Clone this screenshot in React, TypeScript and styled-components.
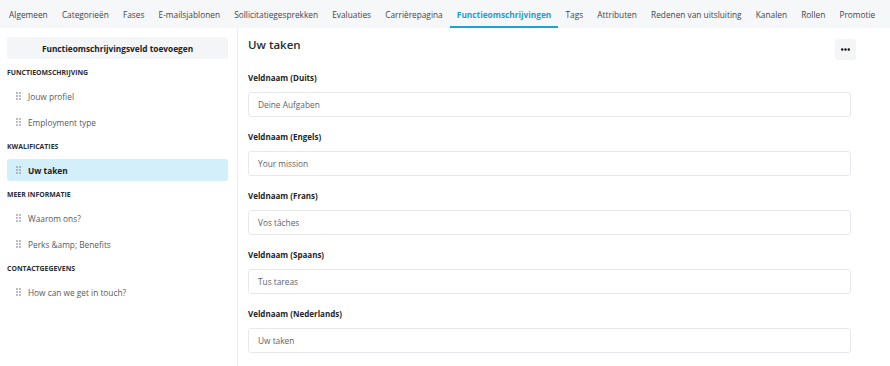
import styled, { createGlobalStyle } from "styled-components";

const GlobalStyle = createGlobalStyle`
  html, body {
    margin: 0;
    padding: 0;
    background: #ffffff;
    font-family: "Open Sans", "Noto Sans", sans-serif;
    color: #333;
  }
  * {
    box-sizing: border-box;
  }
`;

const tabs = [
  "Algemeen",
  "Categorieën",
  "Fases",
  "E-mailsjablonen",
  "Sollicitatiegesprekken",
  "Evaluaties",
  "Carrièrepagina",
  "Functieomschrijvingen",
  "Tags",
  "Attributen",
  "Redenen van uitsluiting",
  "Kanalen",
  "Rollen",
  "Promotie",
];

const sections = [
  { title: "Functieomschrijving", items: ["Jouw profiel", "Employment type"] },
  { title: "Kwalificaties", items: ["Uw taken"] },
  { title: "Meer informatie", items: ["Waarom ons?", "Perks &amp; Benefits"] },
  { title: "Contactgegevens", items: ["How can we get in touch?"] },
];

const fields = [
  { label: "Veldnaam (Duits)", value: "Deine Aufgaben" },
  { label: "Veldnaam (Engels)", value: "Your mission" },
  { label: "Veldnaam (Frans)", value: "Vos tâches" },
  { label: "Veldnaam (Spaans)", value: "Tus tareas" },
  { label: "Veldnaam (Nederlands)", value: "Uw taken" },
];

function DragHandle() {
  return (
    <svg width="5" height="8" viewBox="0 0 5 8" fill="#9a9ea6">
      <circle cx="1" cy="1" r="0.9" />
      <circle cx="4" cy="1" r="0.9" />
      <circle cx="1" cy="4" r="0.9" />
      <circle cx="4" cy="4" r="0.9" />
      <circle cx="1" cy="7" r="0.9" />
      <circle cx="4" cy="7" r="0.9" />
    </svg>
  );
}

function App() {
  return (
    <Page>
      <GlobalStyle />
      <TabBar>
        {tabs.map((tab) => (
          <Tab key={tab} active={tab === "Functieomschrijvingen"}>
            {tab}
          </Tab>
        ))}
      </TabBar>
      <Body>
        <Sidebar>
          <AddButton>Functieomschrijvingsveld toevoegen</AddButton>
          {sections.map((section) => (
            <Section key={section.title}>
              <SectionTitle>{section.title}</SectionTitle>
              {section.items.map((item) => (
                <Item key={item} active={item === "Uw taken"}>
                  <DragHandle />
                  <span>{item}</span>
                </Item>
              ))}
            </Section>
          ))}
        </Sidebar>
        <Content>
          <Header>
            <Title>Uw taken</Title>
            <MoreButton>
              <svg width="9" height="3" viewBox="0 0 9 3" fill="#111">
                <circle cx="1.2" cy="1.5" r="1.2" />
                <circle cx="4.5" cy="1.5" r="1.2" />
                <circle cx="7.8" cy="1.5" r="1.2" />
              </svg>
            </MoreButton>
          </Header>
          {fields.map((field) => (
            <Field key={field.label}>
              <Label>{field.label}</Label>
              <Input>{field.value}</Input>
            </Field>
          ))}
        </Content>
      </Body>
    </Page>
  );
}

const Page = styled.div`
  width: 890px;
  height: 366px;
  overflow: hidden;
  display: flex;
  flex-direction: column;
`;

const TabBar = styled.div`
  display: flex;
  height: 28px;
  padding-left: 2px;
  background: #f6f7f9;
`;

const Tab = styled.div<{ active?: boolean }>`
  display: flex;
  align-items: center;
  padding: 2px 7.1px 0;
  font-size: 8.3px;
  white-space: nowrap;
  color: ${(props) => (props.active ? "#1a9ed8" : "#3f444b")};
  font-weight: ${(props) => (props.active ? 700 : 400)};
  border-bottom: 2px solid ${(props) => (props.active ? "#1aa3db" : "transparent")};
`;

const Body = styled.div`
  flex: 1;
  display: flex;
`;

const Sidebar = styled.div`
  width: 238px;
  flex-shrink: 0;
  padding: 9px 9px 0 7px;
  border-right: 1px solid #eceef1;
`;

const AddButton = styled.div`
  height: 22px;
  display: flex;
  align-items: center;
  justify-content: center;
  background: #f4f5f7;
  border-radius: 3px;
  font-size: 8.3px;
  font-weight: 700;
  color: #222;
`;

const Section = styled.div`
  display: flex;
  flex-direction: column;
  gap: 4px;
`;

const SectionTitle = styled.div`
  height: 14px;
  margin: 6px 0 2px;
  display: flex;
  align-items: center;
  font-size: 6.9px;
  font-weight: 700;
  text-transform: uppercase;
  color: #2a2d33;
`;

const Item = styled.div<{ active?: boolean }>`
  height: 22px;
  display: flex;
  align-items: center;
  gap: 7px;
  padding-left: 9px;
  border-radius: 3px;
  font-size: 8.3px;
  background: ${(props) => (props.active ? "#d3eff9" : "transparent")};
  color: ${(props) => (props.active ? "#1d2025" : "#555a62")};
  font-weight: ${(props) => (props.active ? 700 : 400)};
`;

const Content = styled.div`
  flex: 1;
  padding: 8px 34px 0 10px;
  display: flex;
  flex-direction: column;
`;

const Header = styled.div`
  display: flex;
  justify-content: space-between;
  align-items: flex-start;
  height: 32px;
`;

const Title = styled.div`
  font-size: 11.5px;
  font-weight: 600;
  color: #2a2d33;
  line-height: 12px;
  margin-top: 3px;
`;

const MoreButton = styled.div`
  width: 21px;
  height: 21px;
  margin-top: 3px;
  display: flex;
  align-items: center;
  justify-content: center;
  background: #f4f5f7;
  border-radius: 3px;
`;

const Field = styled.div`
  display: flex;
  flex-direction: column;
  margin-right: 5px;
  margin-bottom: 10px;
`;

const Label = styled.div`
  font-size: 8px;
  font-weight: 700;
  color: #22252a;
  height: 18px;
  display: flex;
  align-items: center;
  margin-bottom: 6px;
`;

const Input = styled.div`
  height: 25px;
  display: flex;
  align-items: center;
  padding-left: 9px;
  border: 1px solid #e6e8ec;
  border-radius: 3px;
  font-size: 8.3px;
  color: #5d6169;
`;

export default App;
